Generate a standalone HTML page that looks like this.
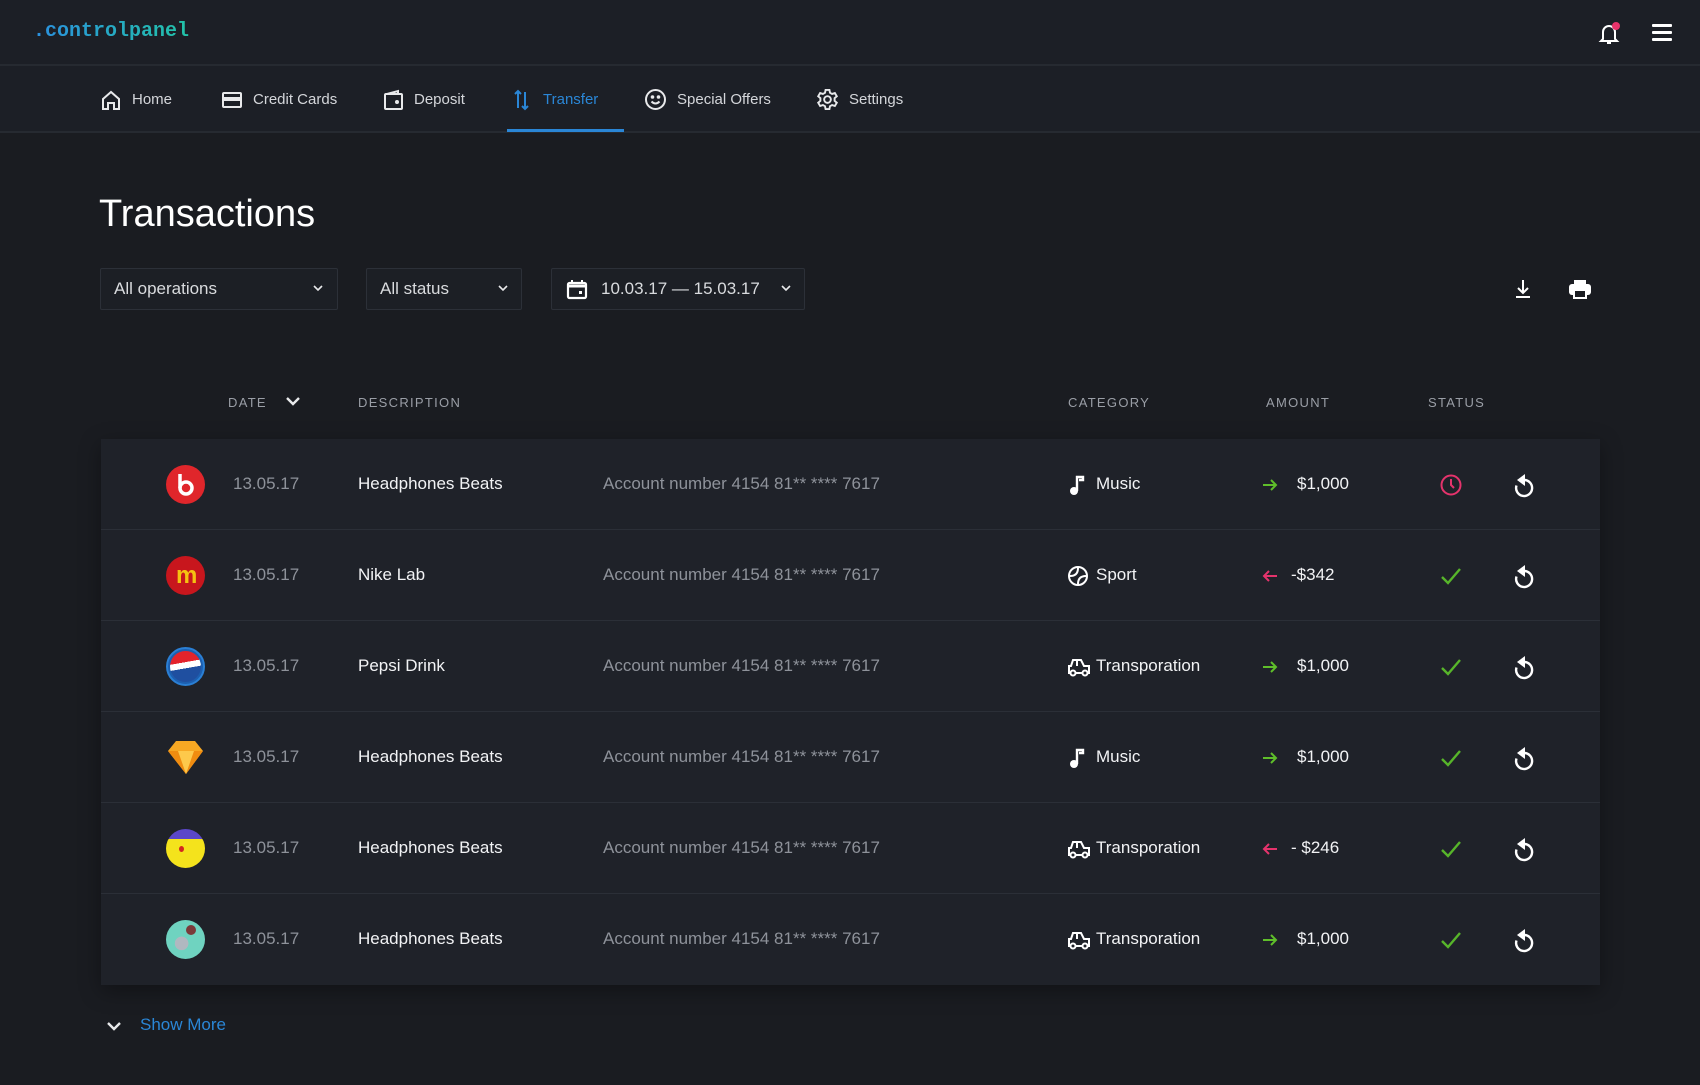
<!DOCTYPE html>
<html><head><meta charset="utf-8"><style>
*{margin:0;padding:0;box-sizing:border-box}
body{width:1700px;height:1085px;background:#1a1c21;font-family:"Liberation Sans",sans-serif;color:#fff;position:relative;overflow:hidden}
.a{position:absolute}
.top{left:0;top:0;width:1700px;height:66px;background:#1c1f26;border-bottom:2px solid #262a31}
.nav{left:0;top:66px;width:1700px;height:67px;background:#1c1f26;border-bottom:2px solid #262a31}
.logo{left:33px;top:20px;font-family:"Liberation Mono",monospace;font-size:20px;font-weight:bold;background:linear-gradient(90deg,#2b8fe0,#22c3a8);-webkit-background-clip:text;color:transparent}
.ni{top:89px;font-size:15px;color:#d4d6da;line-height:22px}
.ic{position:absolute;stroke:#e8e9eb;fill:none;stroke-width:2}
.sel{top:268px;height:42px;border:1px solid #2c3038;background:#1c1f25;border-radius:2px;font-size:17px;color:#d9dbde;line-height:40px;padding-left:13px}
.hd{top:395px;font-size:13px;letter-spacing:1.3px;color:#9a9ea6}
.card{left:101px;top:439px;width:1499px;height:546px;background:#1f2229;box-shadow:0 6px 20px rgba(0,0,0,.35)}
.row{position:absolute;left:0;width:1499px;height:91px;border-bottom:1px solid #2b2f37}
.row:last-child{border-bottom:none}
.row .t{position:absolute;top:34px;font-size:17px;line-height:22px}
.dt{left:132px;color:#8e929a}
.nm{left:257px;color:#f2f3f5}
.ac{left:502px;color:#8e929a}
.ct{left:995px;color:#f2f3f5}
.am{left:1196px;color:#f2f3f5}
.lg{position:absolute;left:65px;top:26px;width:39px;height:39px;border-radius:50%}
.ci{position:absolute;left:966px;top:35px}
.ar{position:absolute;left:1160px;top:39px}
.st{position:absolute;left:1338px;top:34px}
.rf{position:absolute;left:1411px;top:34px}
</style></head><body>
<div class="a top"></div>
<div class="a logo">.controlpanel</div>
<svg class="a" style="left:1597px;top:21px" width="26" height="26" viewBox="0 0 26 26"><path d="M6 18V11a6 6 0 0 1 12 0v7l2 2H4z" fill="none" stroke="#fff" stroke-width="2"/><path d="M10 22h4" stroke="#fff" stroke-width="2"/><circle cx="19" cy="5" r="4" fill="#e8336b"/></svg>
<svg class="a" style="left:1652px;top:23px" width="22" height="20"><rect y="1" width="20" height="3" rx="1" fill="#fff"/><rect y="8" width="20" height="3" rx="1" fill="#fff"/><rect y="15" width="20" height="3" rx="1" fill="#fff"/></svg>

<div class="a nav"></div>
<div class="a" style="left:507px;top:129px;width:117px;height:3px;background:#2a86d6"></div>
<svg class="ic" style="left:100px;top:89px" width="22" height="22"><path d="M3 10L11 3l8 7v10h-5v-6H8v6H3z"/></svg>
<div class="a ni" style="left:132px">Home</div>
<svg class="ic" style="left:221px;top:90px" width="22" height="20"><rect x="2" y="3" width="18" height="14" rx="1"/><path d="M2 8h18M2 10h18" /></svg>
<div class="a ni" style="left:253px">Credit Cards</div>
<svg class="ic" style="left:383px;top:89px" width="22" height="22"><rect x="2" y="5" width="17" height="15" rx="1"/><path d="M4 5l11-3v3"/><circle cx="14" cy="13" r="1" fill="#fff"/></svg>
<div class="a ni" style="left:414px">Deposit</div>
<svg class="ic" style="left:513px;top:88px;stroke:#2a86d6" width="18" height="24"><path d="M5 20V3M2 6l3-3 3 3M12 4v17M9 18l3 3 3-3"/></svg>
<div class="a ni" style="left:543px;color:#2a86d6">Transfer</div>
<svg class="ic" style="left:644px;top:88px" width="23" height="23"><circle cx="11.5" cy="11.5" r="9.5"/><circle cx="8.5" cy="9" r=".8" fill="#fff"/><circle cx="14.5" cy="9" r=".8" fill="#fff"/><path d="M7.5 13.5q4 4 8 0"/></svg>
<div class="a ni" style="left:677px">Special Offers</div>
<svg class="ic" style="left:816px;top:88px" width="23" height="23" viewBox="0 0 24 24"><circle cx="12" cy="12" r="3.5"/><path d="M10 2h4l.6 3 2.2 1.2 2.9-1 2 3.4-2.3 2v2.8l2.3 2-2 3.4-2.9-1-2.2 1.2-.6 3h-4l-.6-3-2.2-1.2-2.9 1-2-3.4 2.3-2v-2.8l-2.3-2 2-3.4 2.9 1L9.4 5z"/></svg>
<div class="a ni" style="left:849px">Settings</div>

<div class="a" style="left:99px;top:191px;font-size:38px;line-height:46px;color:#fff">Transactions</div>

<div class="a sel" style="left:100px;width:238px">All operations</div>
<svg class="ic" style="left:312px;top:283px;stroke-width:1.6" width="12" height="10"><path d="M2 3l4 4 4-4"/></svg>
<div class="a sel" style="left:366px;width:156px">All status</div>
<svg class="ic" style="left:497px;top:283px;stroke-width:1.6" width="12" height="10"><path d="M2 3l4 4 4-4"/></svg>
<div class="a sel" style="left:551px;width:254px;padding-left:49px">10.03.17 — 15.03.17</div>
<svg class="a" style="left:566px;top:278px" width="22" height="22"><rect x="2" y="5" width="18" height="15" rx="1.5" fill="none" stroke="#fff" stroke-width="2.2"/><path d="M2 8h18" stroke="#fff" stroke-width="3"/><path d="M6 2v4M16 2v4" stroke="#fff" stroke-width="2"/><rect x="13" y="13" width="3" height="3" fill="#fff"/></svg>
<svg class="ic" style="left:780px;top:283px;stroke-width:1.6" width="12" height="10"><path d="M2 3l4 4 4-4"/></svg>

<svg class="a" style="left:1513px;top:278px" width="20" height="22"><path d="M10 2v13M5 10l5 5 5-5M3 19h14" fill="none" stroke="#fff" stroke-width="2"/></svg>
<svg class="a" style="left:1568px;top:278px" width="24" height="22"><rect x="6" y="2" width="12" height="5" fill="#fff"/><rect x="1" y="6" width="22" height="11" rx="3" fill="#fff"/><rect x="6" y="12" width="12" height="8" fill="#1a1c21" stroke="#fff" stroke-width="2"/></svg>

<div class="a hd" style="left:228px">DATE</div>
<svg class="ic" style="left:285px;top:395px;stroke-width:2.4" width="16" height="12"><path d="M2 3l6 6 6-6"/></svg>
<div class="a hd" style="left:358px">DESCRIPTION</div>
<div class="a hd" style="left:1068px">CATEGORY</div>
<div class="a hd" style="left:1266px">AMOUNT</div>
<div class="a hd" style="left:1428px">STATUS</div>

<div class="a card">
<div class="row" style="top:0">
<div class="lg" style="background:#e0262b"><svg width="39" height="39"><circle cx="20" cy="23" r="6" fill="none" stroke="#fff" stroke-width="3.5"/><path d="M14 9v14" stroke="#fff" stroke-width="3.5"/></svg></div>
<div class="t dt">13.05.17</div><div class="t nm">Headphones Beats</div><div class="t ac">Account number 4154 81** **** 7617</div>
<svg class="ci" width="20" height="22"><circle cx="7" cy="17" r="4" fill="#fff"/><path d="M10 17V3h6v3h-4" fill="none" stroke="#fff" stroke-width="2.4"/></svg>
<div class="t ct">Music</div>
<svg class="ar" width="18" height="14"><path d="M2 7h13M10 2l5 5-5 5" fill="none" stroke="#5fbf2a" stroke-width="2"/></svg>
<div class="t am">$1,000</div>
<svg class="st" width="24" height="24"><circle cx="12" cy="12" r="9.5" fill="none" stroke="#e5336c" stroke-width="2"/><path d="M12 6v6l3 3" fill="none" stroke="#e5336c" stroke-width="2"/></svg>
<svg class="rf" width="24" height="26"><path d="M12 7a8 8 0 1 1-7.5 5.5" fill="none" stroke="#fff" stroke-width="2.4"/><path d="M13 1v12L5 7z" fill="#fff"/></svg>
</div>
<div class="row" style="top:91px">
<div class="lg" style="background:#c8161d"><div style="position:absolute;left:10px;top:6px;font-size:24px;font-weight:bold;color:#f5c211">m</div></div>
<div class="t dt">13.05.17</div><div class="t nm">Nike Lab</div><div class="t ac">Account number 4154 81** **** 7617</div>
<svg class="ci" width="22" height="22"><circle cx="11" cy="11" r="9" fill="none" stroke="#fff" stroke-width="2"/><path d="M3 11q8 0 8-8M19 11q-8 0-8 8" fill="none" stroke="#fff" stroke-width="2"/></svg>
<div class="t ct">Sport</div>
<svg class="ar" width="18" height="14"><path d="M16 7H3M8 2L3 7l5 5" fill="none" stroke="#e5336c" stroke-width="2"/></svg>
<div class="t am" style="left:1190px">-$342</div>
<svg class="st" width="24" height="24"><path d="M3 13l6 6L21 5" fill="none" stroke="#57b52a" stroke-width="2.4"/></svg>
<svg class="rf" width="24" height="26"><path d="M12 7a8 8 0 1 1-7.5 5.5" fill="none" stroke="#fff" stroke-width="2.4"/><path d="M13 1v12L5 7z" fill="#fff"/></svg>
</div>
<div class="row" style="top:182px">
<div class="lg" style="background:#1c5fb0;border:2px solid #2a7fd4"><div style="position:absolute;left:2px;top:2px;width:31px;height:31px;border-radius:50%;background:linear-gradient(170deg,#e3232c 0 38%,#fff 38% 55%,#1f4fa0 55%)"></div></div>
<div class="t dt">13.05.17</div><div class="t nm">Pepsi Drink</div><div class="t ac">Account number 4154 81** **** 7617</div>
<svg class="ci" width="24" height="22"><path d="M4 10l2-6h8l3 6h5v7H2v-7z" fill="none" stroke="#fff" stroke-width="2"/><path d="M10 4v6" stroke="#fff" stroke-width="2"/><circle cx="6" cy="17" r="2.5" fill="#1f2229" stroke="#fff" stroke-width="2"/><circle cx="18" cy="17" r="2.5" fill="#1f2229" stroke="#fff" stroke-width="2"/></svg>
<div class="t ct">Transporation</div>
<svg class="ar" width="18" height="14"><path d="M2 7h13M10 2l5 5-5 5" fill="none" stroke="#5fbf2a" stroke-width="2"/></svg>
<div class="t am">$1,000</div>
<svg class="st" width="24" height="24"><path d="M3 13l6 6L21 5" fill="none" stroke="#57b52a" stroke-width="2.4"/></svg>
<svg class="rf" width="24" height="26"><path d="M12 7a8 8 0 1 1-7.5 5.5" fill="none" stroke="#fff" stroke-width="2.4"/><path d="M13 1v12L5 7z" fill="#fff"/></svg>
</div>
<div class="row" style="top:273px">
<svg style="position:absolute;left:65px;top:26px" width="39" height="39"><path d="M10 3h19l8 10-17 23L2 13z" fill="#f7a823"/><path d="M2 13h35L20 36z" fill="#f08c10"/><path d="M12 13l8 23 8-23" fill="#fdc94b"/></svg>
<div class="t dt">13.05.17</div><div class="t nm">Headphones Beats</div><div class="t ac">Account number 4154 81** **** 7617</div>
<svg class="ci" width="20" height="22"><circle cx="7" cy="17" r="4" fill="#fff"/><path d="M10 17V3h6v3h-4" fill="none" stroke="#fff" stroke-width="2.4"/></svg>
<div class="t ct">Music</div>
<svg class="ar" width="18" height="14"><path d="M2 7h13M10 2l5 5-5 5" fill="none" stroke="#5fbf2a" stroke-width="2"/></svg>
<div class="t am">$1,000</div>
<svg class="st" width="24" height="24"><path d="M3 13l6 6L21 5" fill="none" stroke="#57b52a" stroke-width="2.4"/></svg>
<svg class="rf" width="24" height="26"><path d="M12 7a8 8 0 1 1-7.5 5.5" fill="none" stroke="#fff" stroke-width="2.4"/><path d="M13 1v12L5 7z" fill="#fff"/></svg>
</div>
<div class="row" style="top:364px">
<div class="lg" style="background:linear-gradient(180deg,#5b47c9 0 25%,#f4e31c 25%)"><div style="position:absolute;left:13px;top:17px;width:5px;height:6px;border-radius:50%;background:#d3261f"></div></div>
<div class="t dt">13.05.17</div><div class="t nm">Headphones Beats</div><div class="t ac">Account number 4154 81** **** 7617</div>
<svg class="ci" width="24" height="22"><path d="M4 10l2-6h8l3 6h5v7H2v-7z" fill="none" stroke="#fff" stroke-width="2"/><path d="M10 4v6" stroke="#fff" stroke-width="2"/><circle cx="6" cy="17" r="2.5" fill="#1f2229" stroke="#fff" stroke-width="2"/><circle cx="18" cy="17" r="2.5" fill="#1f2229" stroke="#fff" stroke-width="2"/></svg>
<div class="t ct">Transporation</div>
<svg class="ar" width="18" height="14"><path d="M16 7H3M8 2L3 7l5 5" fill="none" stroke="#e5336c" stroke-width="2"/></svg>
<div class="t am" style="left:1190px">- $246</div>
<svg class="st" width="24" height="24"><path d="M3 13l6 6L21 5" fill="none" stroke="#57b52a" stroke-width="2.4"/></svg>
<svg class="rf" width="24" height="26"><path d="M12 7a8 8 0 1 1-7.5 5.5" fill="none" stroke="#fff" stroke-width="2.4"/><path d="M13 1v12L5 7z" fill="#fff"/></svg>
</div>
<div class="row" style="top:455px">
<div class="lg" style="background:radial-gradient(circle at 40% 60%,#b0b8c0 0 20%,#6fd3c0 21%)"><div style="position:absolute;left:20px;top:5px;width:10px;height:10px;border-radius:50%;background:#7a3a3a"></div></div>
<div class="t dt">13.05.17</div><div class="t nm">Headphones Beats</div><div class="t ac">Account number 4154 81** **** 7617</div>
<svg class="ci" width="24" height="22"><path d="M4 10l2-6h8l3 6h5v7H2v-7z" fill="none" stroke="#fff" stroke-width="2"/><path d="M10 4v6" stroke="#fff" stroke-width="2"/><circle cx="6" cy="17" r="2.5" fill="#1f2229" stroke="#fff" stroke-width="2"/><circle cx="18" cy="17" r="2.5" fill="#1f2229" stroke="#fff" stroke-width="2"/></svg>
<div class="t ct">Transporation</div>
<svg class="ar" width="18" height="14"><path d="M2 7h13M10 2l5 5-5 5" fill="none" stroke="#5fbf2a" stroke-width="2"/></svg>
<div class="t am">$1,000</div>
<svg class="st" width="24" height="24"><path d="M3 13l6 6L21 5" fill="none" stroke="#57b52a" stroke-width="2.4"/></svg>
<svg class="rf" width="24" height="26"><path d="M12 7a8 8 0 1 1-7.5 5.5" fill="none" stroke="#fff" stroke-width="2.4"/><path d="M13 1v12L5 7z" fill="#fff"/></svg>
</div>
</div>

<svg class="ic" style="left:106px;top:1020px;stroke-width:2.4" width="16" height="12"><path d="M2 3l6 6 6-6"/></svg>
<div class="a" style="left:140px;top:1014px;font-size:17px;line-height:22px;color:#2a86d6">Show More</div>
</body></html>
